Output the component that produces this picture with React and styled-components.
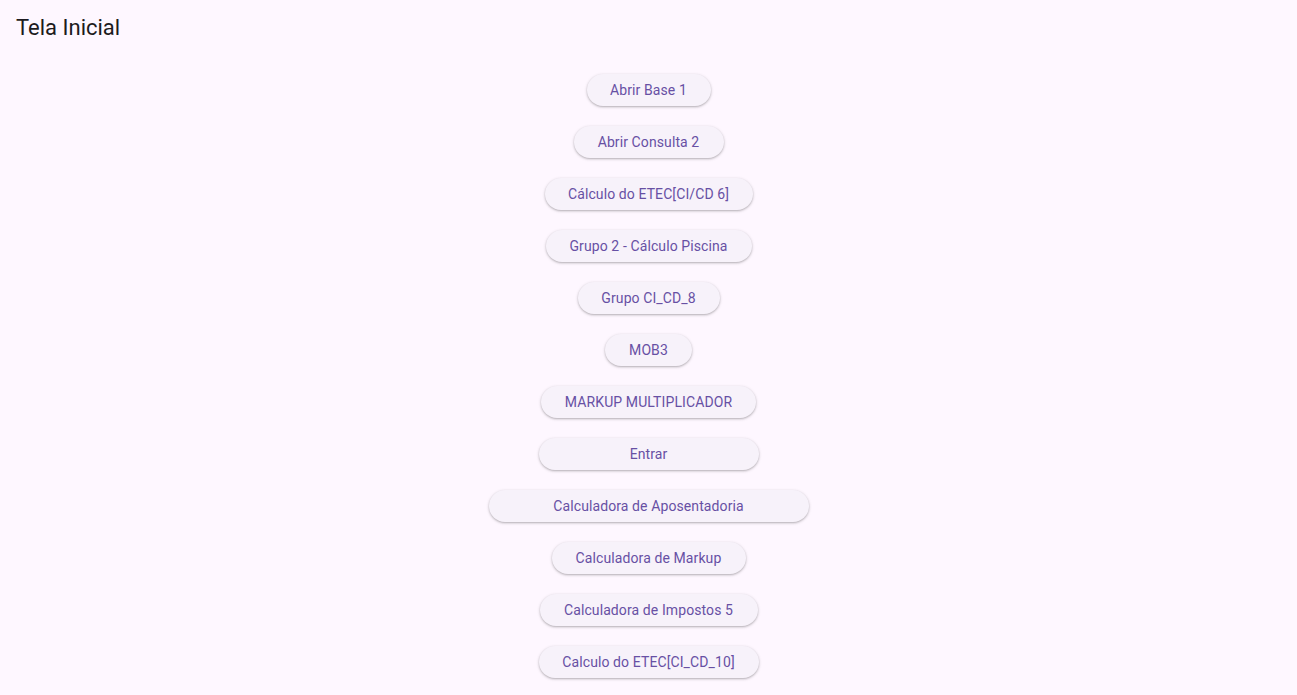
import React from "react";
import styled, { createGlobalStyle } from "styled-components";

const Global = createGlobalStyle`
  html, body {
    margin: 0;
    padding: 0;
    background: #fef7ff;
    font-family: Roboto, "Noto Sans", sans-serif;
    -webkit-font-smoothing: antialiased;
  }
`;

const Page = styled.div`
  min-height: 695px;
  background: #fef7ff;
  display: flex;
  flex-direction: column;
`;

const AppBar = styled.header`
  height: 56px;
  display: flex;
  align-items: center;
  padding: 0 16px;
  box-sizing: border-box;
`;

const Title = styled.h1`
  margin: 0;
  font-family: Roboto, sans-serif;
  font-size: 22px;
  font-weight: 400;
  line-height: 28px;
  color: #1d1b20;
`;

const ButtonList = styled.main`
  display: flex;
  flex-direction: column;
  align-items: center;
  gap: 20px;
  padding-top: 18px;
`;

const MenuButton = styled.button`
  width: ${(p) => p.$w}px;
  height: 32px;
  box-sizing: border-box;
  border: none;
  border-radius: 16px;
  background: #f7f2fa;
  color: #6750a4;
  font-family: Roboto, sans-serif;
  font-size: 14px;
  font-weight: 400;
  letter-spacing: 0.1px;
  padding: 0 12px;
  cursor: pointer;
  white-space: nowrap;
  box-shadow: 0 1px 2px rgba(0, 0, 0, 0.22), 0 1px 3px 1px rgba(0, 0, 0, 0.07);
`;

const items = [
  ["Abrir Base 1", 124],
  ["Abrir Consulta 2", 150],
  ["Cálculo do ETEC[CI/CD 6]", 208],
  ["Grupo 2 - Cálculo Piscina", 206],
  ["Grupo CI_CD_8", 142],
  ["MOB3", 87],
  ["MARKUP MULTIPLICADOR", 215],
  ["Entrar", 220],
  ["Calculadora de Aposentadoria", 320],
  ["Calculadora de Markup", 194],
  ["Calculadora de Impostos 5", 218],
  ["Calculo do ETEC[CI_CD_10]", 220],
];

export default function App() {
  return (
    <Page>
      <Global />
      <AppBar>
        <Title>Tela Inicial</Title>
      </AppBar>
      <ButtonList>
        {items.map(([label, w]) => (
          <MenuButton key={label} $w={w}>
            {label}
          </MenuButton>
        ))}
      </ButtonList>
    </Page>
  );
}
